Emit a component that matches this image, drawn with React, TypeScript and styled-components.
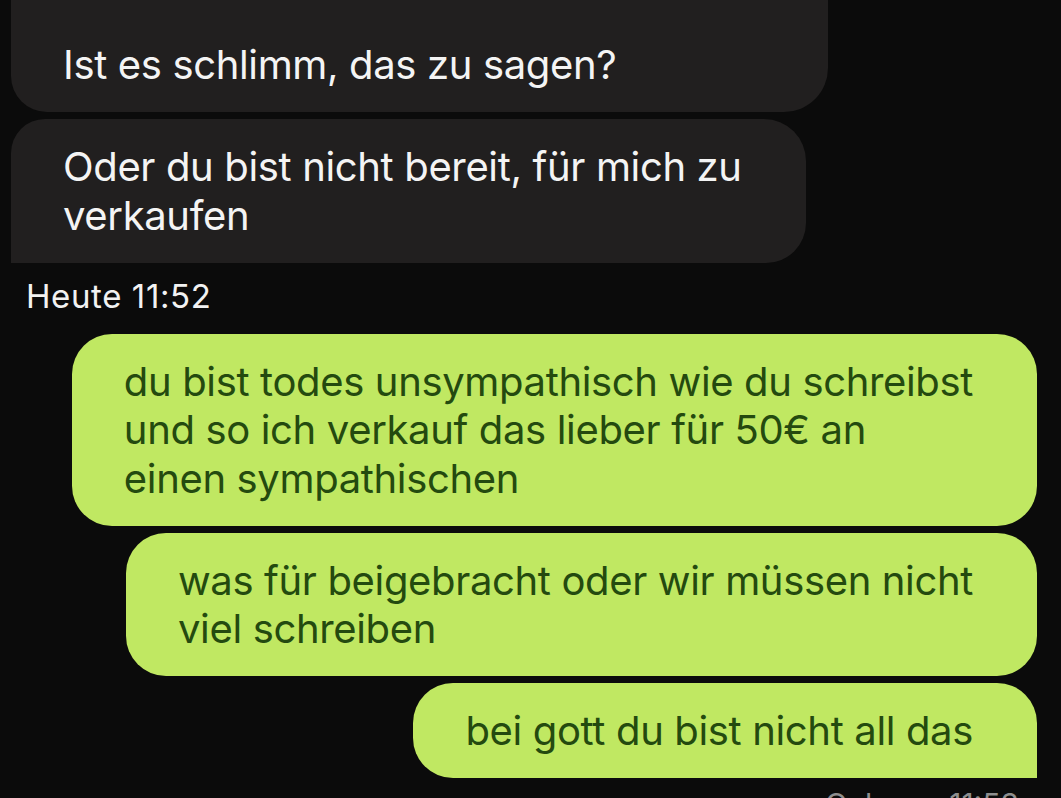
import styled, { createGlobalStyle } from 'styled-components'

const GlobalStyle = createGlobalStyle`
  html, body {
    margin: 0;
    padding: 0;
    background: #0b0b0b;
  }
  body {
    font-family: Inter, "Noto Sans", "Liberation Sans", sans-serif;
    -webkit-font-smoothing: antialiased;
  }
`

type Message = {
  id: number
  lines: string[]
  outgoing?: boolean
  tail?: boolean
  clipped?: boolean
}

const earlier: Message[] = [
  { id: 1, lines: ['Ist es schlimm, das zu sagen?'], clipped: true },
  { id: 2, lines: ['Oder du bist nicht bereit, für mich zu', 'verkaufen'], tail: true }
]

const today: Message[] = [
  {
    id: 3,
    outgoing: true,
    lines: [
      'du bist todes unsympathisch wie du schreibst',
      'und so ich verkauf das lieber für 50€ an',
      'einen sympathischen'
    ]
  },
  {
    id: 4,
    outgoing: true,
    lines: ['was für beigebracht oder wir müssen nicht', 'viel schreiben']
  },
  { id: 5, outgoing: true, tail: true, lines: ['bei gott du bist nicht all das'] }
]

const ChatBubble = ({ message }: { message: Message }) => (
  <Bubble
    $outgoing={!!message.outgoing}
    $tail={!!message.tail}
    $clipped={!!message.clipped}
  >
    {message.lines.map((line, i) => (
      <Line key={i}>{line}</Line>
    ))}
  </Bubble>
)

const App = () => {
  return (
    <>
      <GlobalStyle />
      <Screen>
        <Thread>
          {earlier.map(m => (
            <ChatBubble key={m.id} message={m} />
          ))}
          <DayLabel>Heute 11:52</DayLabel>
          {today.map(m => (
            <ChatBubble key={m.id} message={m} />
          ))}
          <ReadStatus>Gelesen 11:53</ReadStatus>
        </Thread>
      </Screen>
    </>
  )
}

export default App

const Screen = styled.div`
  width: 1061px;
  height: 798px;
  overflow: hidden;
  background: #0b0b0b;
`

const Thread = styled.div`
  display: flex;
  flex-direction: column;
  gap: 7px;
  padding: 0 24px 0 11px;
`

const Bubble = styled.div<{ $outgoing: boolean; $tail: boolean; $clipped: boolean }>`
  align-self: ${({ $outgoing }) => ($outgoing ? 'flex-end' : 'flex-start')};
  box-sizing: border-box;
  width: fit-content;
  min-width: ${({ $clipped }) => ($clipped ? '817px' : '0')};
  padding: ${({ $clipped }) => ($clipped ? '41px' : '24px')} 64px 22.5px 52px;
  font-size: 40px;
  line-height: 48.5px;
  letter-spacing: -0.35px;
  color: ${({ $outgoing }) => ($outgoing ? '#244a0f' : '#f4f4f4')};
  background: ${({ $outgoing }) => ($outgoing ? '#c0e862' : '#211f1f')};
  border-radius: ${({ $outgoing, $tail, $clipped }) => {
    if ($clipped) return '0 0 44px 36px'
    if ($outgoing) return $tail ? '40px 40px 0 40px' : '40px'
    return $tail ? '34px 42px 40px 0' : '34px 44px 44px 34px'
  }};
`

const Line = styled.div`
  white-space: nowrap;
`

const DayLabel = styled.div`
  margin: 6px 0 11px 15px;
  font-size: 33px;
  line-height: 40px;
  letter-spacing: 0.6px;
  color: #f2f2f2;
`

const ReadStatus = styled.div`
  align-self: flex-end;
  margin: 1px 18px 0 0;
  font-size: 30px;
  line-height: 36px;
  color: #8e8e8e;
`
